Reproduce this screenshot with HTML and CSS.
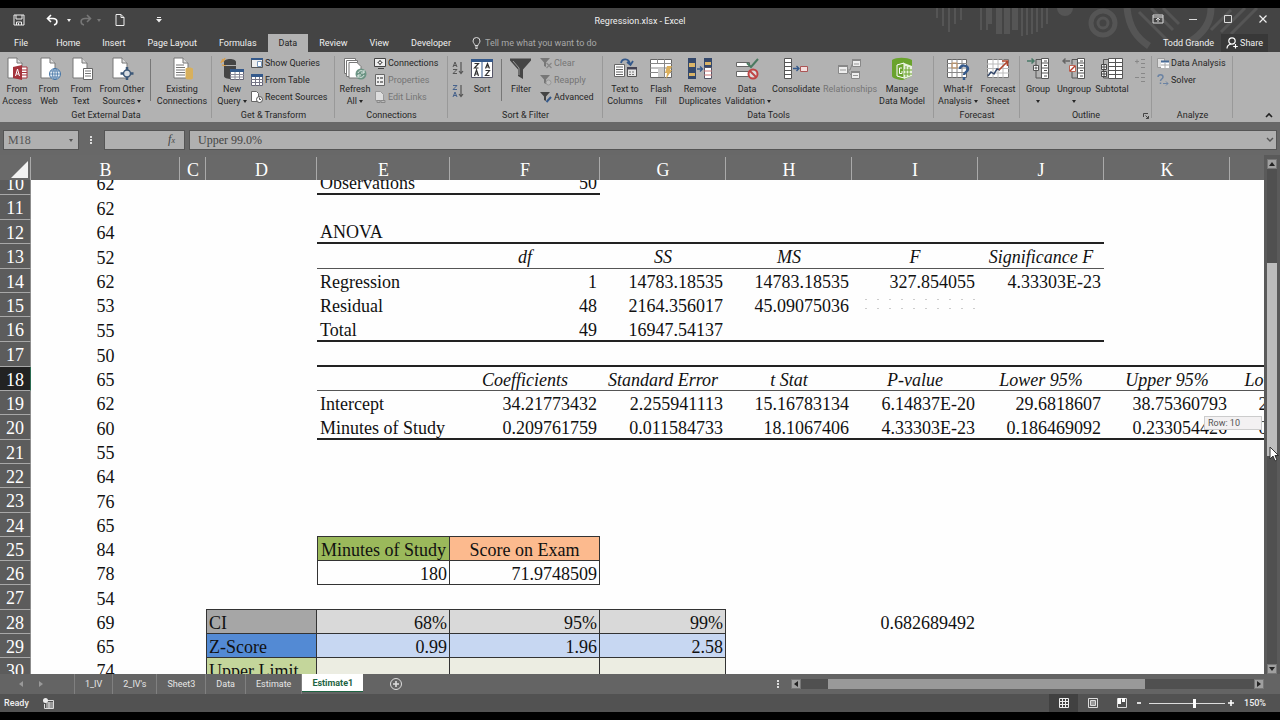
FILE: index.html
```html
<!DOCTYPE html>
<html lang="en">

<head>
    <meta charset="utf-8">
    <meta name="viewport" content="width=device-width, initial-scale=1">
    <title>Regression.xlsx - Excel</title>
    <link rel="stylesheet" href="styles.css">
</head>

<body>
    <div class="app">
        <header class="top">
            <!-- circuit pattern behind the title bar -->
            <svg class="deco" width="345" height="44" viewBox="0 0 345 44" fill="none" stroke="#555">
                <path d="M2 0v10M8 0v18M14 0v24M20 0v16M26 0v12M46 0v22M52 0v22" stroke-width="2" />
                <path d="M54 0v16M64 0v26M72 0v26M80 0v22" stroke-width="6" />
                <path d="M87 0v28M92 0v27M97 0v26M102 0v24M107 0v20M112 0v16" stroke-width="2" />
                <circle cx="130" cy="0" r="8" fill="#555" stroke="none" />
                <circle cx="168" cy="15" r="12" stroke-width="5" />
                <circle cx="168" cy="15" r="5" stroke-width="3" />
                <path d="M192 0c2 20 10 30 22 38M276 0c0 14-8 26-22 34" stroke-width="7" />
                <path d="M204 4l30 30M216 0l22 22M228 0l16 16M286 24l24-24M296 26l26-26M276 22l20-20" stroke-width="3" />
            </svg>
            <div class="titlebar">
                <div class="qat">
                    <button aria-label="Save"><svg width="12" height="12" viewBox="0 0 12 12" fill="none" stroke="#eee"><path d="M1 1h10v10H1zM3 1v4h6V1M3.500 11V8h5v3M5.500 9v2" /></svg></button>
                    <button class="undo" aria-label="Undo"><svg width="12" height="12" viewBox="0 0 12 12" fill="none" stroke="#fff" stroke-width="1.600"><path d="M5 1L1.500 4.500L5 8M1.500 4.500H7c5 0 5 5.500 1 6.500" /></svg></button>
                    <button class="drop" aria-label="Undo list"><i class="caret"></i></button>
                    <button class="dim" aria-label="Redo"><svg width="12" height="12" viewBox="0 0 12 12" fill="none" stroke="#777" stroke-width="1.600"><path d="M7 1l3.500 3.500L7 8M10.500 4.500H5c-5 0-5 5.500-1 6.500" /></svg></button>
                    <button class="drop dim" aria-label="Redo list"><i class="caret"></i></button>
                    <button class="newdoc" aria-label="New"><svg width="10" height="12" viewBox="0 0 10 12" fill="none" stroke="#eee"><path d="M1 .500h5l3 3v8H1zM6 .500v3h3" /></svg></button>
                    <button class="more" aria-label="Customize"><svg width="6" height="6" viewBox="0 0 6 6" fill="#eee"><path d="M1 0h4v1H1zM0 2h6L3 5.500z" /></svg></button>
                </div>
                <h1>Regression.xlsx - Excel</h1>
                <div class="winbtns">
                    <button aria-label="Ribbon options"><svg width="12" height="10" viewBox="0 0 12 10" fill="none" stroke="#ddd"><path d="M1 1h10v8H1zM1 3h10M6 8V4.500M4 6l2-2l2 2" /></svg></button>
                    <button aria-label="Minimize"><svg width="10" height="10" viewBox="0 0 10 10" stroke="#ddd"><path d="M1 5.500h8" /></svg></button>
                    <button aria-label="Maximize"><svg width="10" height="10" viewBox="0 0 10 10" fill="none" stroke="#ddd"><path d="M1.500 1.500h7v7h-7z" /></svg></button>
                    <button aria-label="Close"><svg width="10" height="10" viewBox="0 0 10 10" stroke="#eee" stroke-width="1.200"><path d="M1.500 1.500l7 7M8.500 1.500l-7 7" /></svg></button>
                </div>
            </div>
            <nav class="tabs">
                <button class="file">File</button>
                <button>Home</button>
                <button>Insert</button>
                <button>Page Layout</button>
                <button>Formulas</button>
                <button class="on">Data</button>
                <button>Review</button>
                <button>View</button>
                <button>Developer</button>
                <label class="tell">
                    <svg width="9" height="12" viewBox="0 0 9 12" fill="none" stroke="#ddd"><path d="M3 8.500C3 7 1 6 1 4a3.500 3.500 0 0 1 7 0c0 2-2 3-2 4.500zM3 10h3M3.500 11.500h2" /></svg>
                    <input type="text" placeholder="Tell me what you want to do">
                </label>
                <button class="user">Todd Grande</button>
                <button class="share">
                    <svg width="12" height="12" viewBox="0 0 12 12" fill="none" stroke="#fff" stroke-width="1.200"><circle cx="6" cy="4" r="3.200" /><path d="M1 11.500c0-3 2-4 4-4.500M9.500 7v4.500M7.200 9.500h4.600" /></svg>
                    Share
                </button>
            </nav>
        </header>

        <div class="ribbon">
            <section class="group g-ext">
                <div class="items">
                    <button class="big w32"><svg viewBox="0 0 24 24"><path d="M3 1h9l5 5v15H3z" fill="#fff" stroke="#777" /><path d="M12 1v5h5" fill="#ddd" stroke="#777" /><path d="M15 10h7v11h-7z" fill="#fff" stroke="#a5333c" /><path d="M17 13h5M17 15.500h5M17 18h5" stroke="#a5333c" /><path d="M8 10l9-2v15l-9-2z" fill="#a5333c" /><path d="M10.500 19l2-7l2 7M11.200 17h2.700" stroke="#fff" fill="none" /></svg>From<br>Access</button>
                    <button class="big w32"><svg viewBox="0 0 24 24"><path d="M4 1h9l5 5v15H4z" fill="#fff" stroke="#777" /><path d="M13 1v5h5" fill="#ddd" stroke="#777" /><circle cx="18" cy="17" r="5.500" fill="#e4edf5" stroke="#4474a5" /><path d="M12.500 17h11M13.500 14h9M13.500 20h9M18 11.500v11" stroke="#4474a5" stroke-width=".8" /><ellipse cx="18" cy="17" rx="2.500" ry="5.500" fill="none" stroke="#4474a5" stroke-width=".8" /></svg>From<br>Web</button>
                    <button class="big w32"><svg viewBox="0 0 24 24"><path d="M4 1h9l5 5v15H4z" fill="#fff" stroke="#777" /><path d="M13 1v5h5" fill="#ddd" stroke="#777" /><path d="M14.500 11.500h9v11h-9z" fill="#fff" stroke="#666" /><path d="M16 14h6M16 16.500h6M16 19h6" stroke="#777" /></svg>From<br>Text</button>
                    <button class="big w50"><svg viewBox="0 0 24 24"><path d="M3 1h9l5 5v15H3z" fill="#fff" stroke="#777" /><path d="M12 1v5h5" fill="#ddd" stroke="#777" /><circle cx="17" cy="16.500" r="3.500" fill="#d8dde2" stroke="#3d5878" stroke-width="1.500" /><path d="M17 10v3M17 20v3M10.500 16.500h3M20.500 16.500h3" stroke="#3d5878" stroke-width="2.500" /></svg>From Other<br>Sources <i class="caret"></i></button>
                    <span class="sep"></span>
                    <button class="big w58"><svg viewBox="0 0 24 24"><path d="M4 1h9l5 5v15H4z" fill="#fff" stroke="#777" /><path d="M13 1v5h5" fill="#ddd" stroke="#777" /><path d="M6 8h8M6 10.500h9M6 13h9M6 15.500h9M6 18h9" stroke="#777" /><path d="M15.500 12v9c0 2 7.500 2 7.500 0v-9c0-2-7.500-2-7.500 0z" fill="#d8b05c" /></svg>Existing<br>Connections</button>
                </div>
                <h2>Get External Data</h2>
            </section>

            <section class="group g-get">
                <div class="items pad">
                    <button class="big w36"><svg viewBox="0 0 24 24"><path d="M1 6l2-4M2 8l4 1M5 1L3 5" stroke="#d8a050" stroke-width="1.500" /><path d="M4 5c0-4 12-4 12 0v3H4zM4 9h12v3l-4 1v9c-5 0-8-1-8-3z" fill="#454545" /><path d="M10.500 12.500h13v10h-13z" fill="#fff" stroke="#667" /><path d="M10 12h14v3H10z" fill="#34598b" /><path d="M10 17.500h14M10 20h14M15 15v8M19.500 15v8" stroke="#889" /></svg>New<br>Query <i class="caret"></i></button>
                    <div class="col">
                        <button><svg viewBox="0 0 12 12"><path d="M.500 1.500h11v9H.500z" fill="#eee" stroke="#555" /><path d="M0 1h12v2H0z" fill="#34598b" /><path d="M6.500 4.500h4v5h-4z" fill="#fff" stroke="#7a98bb" /></svg>Show Queries</button>
                        <button><svg viewBox="0 0 12 12"><path d="M.500 .500h11v11H.500z" fill="#fff" stroke="#667" /><path d="M0 0h12v3H0z" fill="#34598b" /><path d="M0 5.500h12M0 8.500h12M4.500 3v9M8.500 3v9" stroke="#778" /></svg>From Table</button>
                        <button><svg viewBox="0 0 12 12"><path d="M.500 .500h5l2 2v8h-7z" fill="#fff" stroke="#666" /><circle cx="8.500" cy="8.500" r="3" fill="#fff" stroke="#555" /><path d="M8.500 6.500v2h1.500" stroke="#555" fill="none" /></svg>Recent Sources</button>
                    </div>
                </div>
                <h2>Get &amp; Transform</h2>
            </section>

            <section class="group g-con">
                <div class="items pad">
                    <button class="big w36"><svg viewBox="0 0 24 24"><path d="M1.500 1.500h11v15h-11z" fill="#fff" stroke="#777" /><path d="M3.500 3.500h11v16h-11z" fill="#fff" stroke="#777" /><path d="M6 5.500h8l4 4V21H6z" fill="#fff" stroke="#777" /><circle cx="18" cy="17" r="5.500" fill="#6c9484" /><path d="M15 16c1-3 5-3 6-.500M21 13v3h-3M21 18c-1 3-5 3-6 .500M15 21v-3h3" stroke="#dfe9e4" fill="none" /></svg>Refresh<br>All <i class="caret"></i></button>
                    <div class="col">
                        <button><svg viewBox="0 0 12 12"><path d="M.500 1.500h11v8H.500z" fill="#eee" stroke="#444" /><path d="M6 3v5M3.500 5.500h5M4 11.500h6" stroke="#444" /><circle cx="6" cy="5.500" r="1.500" fill="#fff" stroke="#444" /></svg>Connections</button>
                        <button disabled><svg viewBox="0 0 12 12"><path d="M1.500 .500h9v11h-9z" fill="#eee" stroke="#666" /><path d="M3 4h2M6 4h3M3 8h2M6 8h3" stroke="#666" stroke-width="1.500" /></svg>Properties</button>
                        <button disabled><svg viewBox="0 0 12 12"><path d="M1.500 .500h5l3 3v6h-8z" fill="#ddd" stroke="#999" /><path d="M3 9.500h3v2H3zM7 9.500h4v2H7z" fill="#bbb" stroke="#888" /></svg>Edit Links</button>
                    </div>
                </div>
                <h2>Connections</h2>
            </section>

            <section class="group g-sort">
                <div class="items">
                    <div class="az">
                        <button aria-label="Sort A to Z"><svg viewBox="0 0 12 14" fill="none" stroke="#555"><path d="M1 6l2-5l2 5M1.700 4.500h2.600M1 8.500h4l-4 4h4" /><path d="M9 1v11M7 10l2 2.500l2-2.500" stroke-width="1.200" /></svg></button>
                        <button aria-label="Sort Z to A"><svg viewBox="0 0 12 14" fill="none" stroke="#555"><path d="M1 1.500h4l-4 4h4" stroke="#46628c" /><path d="M1 13l2-5l2 5M1.700 11.500h2.600" stroke="#46628c" /><path d="M9 1v11M7 10l2 2.500l2-2.500" stroke-width="1.200" /></svg></button>
                    </div>
                    <button class="big w36"><svg viewBox="0 0 24 24"><path d="M1.500 2.500h21v18h-21z" fill="#fff" stroke="#556" /><path d="M1 2h22v3H1zM11.500 5h1v16h-1z" fill="#34598b" /><path d="M4.500 6.500h4L4.500 11h4M4.500 19l2-6l2 6M5.200 17h2.600M15.500 11.500l2-5l2 5M16.200 10h2.600M15.500 13.500h4l-4 5h4" fill="none" stroke="#333" stroke-width="1.200" /></svg>Sort</button>
                    <span class="sep s1"></span>
                    <button class="big w36"><svg viewBox="0 0 24 24"><path d="M1 1.500h21v2l-8 9V22l-5-3v-6.500l-8-9z" fill="#454545" /><path d="M4 4l6 7v7" stroke="#999" fill="none" /></svg>Filter</button>
                    <div class="col">
                        <button disabled><svg viewBox="0 0 12 12"><path d="M0 1h10L6 5.500V10L4 9V5.500z" fill="#777" /><path d="M6.500 6l5 5M11.500 6l-5 5" stroke="#888" stroke-width="1.300" /></svg>Clear</button>
                        <button disabled><svg viewBox="0 0 12 12"><path d="M0 1h10L6 5.500V10L4 9V5.500z" fill="#777" /><circle cx="8.500" cy="8.500" r="2.500" fill="#bbb" stroke="#999" /></svg>Reapply</button>
                        <button><svg viewBox="0 0 12 12"><path d="M0 1h10L6 5.500V10L4 9V5.500z" fill="#444" /><path d="M6.500 11l4.500-5" stroke="#34598b" stroke-width="2" /></svg>Advanced</button>
                    </div>
                </div>
                <h2>Sort &amp; Filter</h2>
            </section>

            <section class="group g-tools">
                <div class="items">
                    <button class="big w44"><svg viewBox="0 0 24 24"><path d="M1.500 7.500h10v12h-10z" fill="#fff" stroke="#666" /><path d="M3 10h7M3 12.500h7M3 15h7M3 17.500h7" stroke="#666" /><path d="M14.500 10.500h9v9h-9z" fill="#e8e8e8" stroke="#555" /><path d="M14 10h10v2.500H14z" fill="#445" /><path d="M16 15h6M16 17.500h6" stroke="#777" stroke-dasharray="2 1" /><path d="M8 6c1-5 8-5 9 1M14 5l3.500 3L20 4" stroke="#34598b" stroke-width="1.800" fill="none" /></svg>Text to<br>Columns</button>
                    <button class="big w28"><svg viewBox="0 0 24 24"><path d="M1.500 2.500h21v18h-21z" fill="#fff" stroke="#666" /><path d="M1 6.500h22M1 11h22M1 15.500h22M8.500 2v5M15.500 2v19" stroke="#888" /><path d="M9 11.500h6v8.500H9z" fill="#ccc" /><path d="M18 9h5l-2 4h2l-6 9l1-6h-2z" fill="#dcb05c" /></svg>Flash<br>Fill</button>
                    <button class="big w50"><svg viewBox="0 0 24 24"><path d="M0 1h8v21H0zM16 1h8v10h-8z" fill="#34486b" /><path d="M1 6h6v4H1zM1 16h6v3H1zM17 5h6v3h-6z" fill="#d9b468" /><path d="M16.500 10.500h7v11h-7z" fill="#fff" stroke="#556" /><path d="M16 14h8M16 18h8" stroke="#c77" /><path d="M9 12h5M12 9.500l2.500 2.500L12 14.500" stroke="#34598b" stroke-width="1.300" fill="none" /></svg>Remove<br>Duplicates</button>
                    <button class="big w44"><svg viewBox="0 0 24 24"><path d="M1.500 5.500h13v4h-13zM1.500 14.500h12v5h-12z" fill="#fff" stroke="#666" /><path d="M12 6l4 4l7-8" stroke="#4a7a60" stroke-width="2" fill="none" /><circle cx="18" cy="17" r="4.500" fill="#ddd" stroke="#bf4444" stroke-width="2" /><path d="M15 14l6 6" stroke="#bf4444" stroke-width="2" /></svg>Data<br>Validation <i class="caret"></i></button>
                    <button class="big w54"><svg viewBox="0 0 24 24"><path d="M.500 1.500h7v20h-7z" fill="#fff" stroke="#555" /><path d="M0 5.500h8M0 9.500h8M0 13.500h8M0 17.500h8" stroke="#555" /><path d="M9 11.500h6M12.500 9l2.500 2.500l-2.500 2.500" stroke="#34598b" stroke-width="1.300" fill="none" /><path d="M16.500 9.500h7v5h-7z" fill="#f3dede" stroke="#a55" /></svg>Consolidate</button>
                    <button class="big w54" disabled><svg viewBox="0 0 24 24"><path d="M9 13h3l3-8M9 13l4 5h3" stroke="#888" fill="none" /><path d="M.500 8.500h9v8h-9zM14.500 2.500h8v7h-8zM13.500 14.500h8v7h-8z" fill="#eee" stroke="#888" /><path d="M0 8h10v2H0zM14 2h9v2h-9zM13 14h9v2h-9z" fill="#888" /><path d="M2 13h6M16 7h5M15 18.500h5" stroke="#999" /></svg>Relationships</button>
                    <button class="big w50"><svg viewBox="0 0 24 24"><path d="M2 3c4-3 15-3 20 0v16l-9 4c-5 0-11-2-11-4z" fill="#6aa32c" /><path d="M7 8l7-2v15l-7-2z" fill="#6aa32c" stroke="#fff" /><path d="M12 11H9.500v5.500H12V14" stroke="#fff" fill="none" /><path d="M14 6l8 3v10l-8 3z" fill="#e8f2dc" /><path d="M16 9v11M19 10v9M14 13h8M14 17h8" stroke="#6aa32c" /></svg>Manage<br>Data Model</button>
                </div>
                <h2>Data Tools</h2>
            </section>

            <section class="group g-fore">
                <div class="items pad">
                    <button class="big w44"><svg viewBox="0 0 24 24"><path d="M1.500 2.500h19v18h-19z" fill="#fff" stroke="#666" /><path d="M1 6.500h20M1 11h20M1 15.500h20M6 2v19M11 2v19M16 2v19" stroke="#888" /><path d="M6 6h5v5H6z" fill="none" stroke="#c96" /><path d="M14 12c0-5 8-4 8 0c0 3-4 3-4 6M18 20v3" stroke="#34598b" stroke-width="2.500" fill="none" /></svg>What-If<br>Analysis <i class="caret"></i></button>
                    <button class="big w36"><svg viewBox="0 0 24 24"><path d="M1.500 2.500h21v18h-21z" fill="#fff" stroke="#777" /><path d="M1 7h22M1 11.500h22M1 16h22M7 2v19M12 2v19M17 2v19" stroke="#bbb" /><path d="M2 19l3-4l3 2l3-5l3 1" stroke="#34486b" stroke-width="1.500" fill="none" /><path d="M13 13l8-8M16 4h5.500v5" stroke="#b0452c" stroke-width="1.600" fill="none" /></svg>Forecast<br>Sheet</button>
                </div>
                <h2>Forecast</h2>
            </section>

            <section class="group g-out">
                <div class="items">
                    <button class="big w36"><svg viewBox="0 0 24 24"><path d="M1 4h7M5.500 1.500L8 4L5.500 6.500" stroke="#4a7a68" stroke-width="1.500" fill="none" /><path d="M15 2.500h-5v5M10 14v7h5M10 7v3" stroke="#555" fill="none" /><path d="M7.500 8.500h5v5h-5z" fill="#fff" stroke="#555" /><path d="M8.500 11h3M10 9.500v3" stroke="#555" /><path d="M15.500 1.500h7v20h-7z" fill="#fff" stroke="#555" /><path d="M15 6h8M15 11h8M15 16h8M18 4h3M18 8.500h3M18 13.500h3M18 19h3" stroke="#555" /></svg>Group<br><i class="caret"></i></button>
                    <button class="big w36"><svg viewBox="0 0 24 24"><path d="M1 4h7M3.500 1.500L1 4l2.500 2.500" stroke="#666" stroke-width="1.500" fill="none" /><path d="M15 2.500h-5v5M10 14v7h5" stroke="#555" fill="none" /><path d="M7.500 8.500h6v6h-6z" fill="#fff" stroke="#b65" /><path d="M8 14l5-5" stroke="#b43c2c" stroke-width="1.500" /><path d="M15.500 1.500h7v20h-7z" fill="#fff" stroke="#555" /><path d="M15 6h8M15 11h8M15 16h8M18 4h3M18 8.500h3M18 13.500h3M18 19h3" stroke="#555" /></svg>Ungroup<br><i class="caret"></i></button>
                    <button class="big w40"><svg viewBox="0 0 24 24"><path d="M8 2.500H3.500V21H8" stroke="#555" fill="none" /><path d="M1.500 7.500h5v5h-5zM1.500 14.500h5v5h-5z" fill="#fff" stroke="#444" /><path d="M2 10h4M4 8v4M2 17h4M4 15v4" stroke="#444" /><path d="M8.500 1.500h14v20h-14z" fill="#fff" stroke="#555" /><path d="M8 5.500h15M8 9.500h15M8 13.500h15M8 17.500h15M15.500 1v21" stroke="#555" /></svg>Subtotal</button>
                    <div class="az up">
                        <button disabled aria-label="Show detail"><svg viewBox="0 0 12 14" stroke="#888"><path d="M7 3.500h4M7 7.500h4M7 11.500h4M1 5.500h4M3 3.500v4" /></svg></button>
                        <button disabled aria-label="Hide detail"><svg viewBox="0 0 12 14" stroke="#888"><path d="M7 1.500h4M7 5.500h4M7 9.500h4M1 5.500h4" /></svg></button>
                    </div>
                </div>
                <h2>Outline</h2>
                <button class="launch" aria-label="Outline settings"><svg width="6" height="6" viewBox="0 0 6 6" fill="none" stroke="#444"><path d="M.500 4V.500H5M2.500 2.500l3 3M5.500 3v2.500H3" /></svg></button>
            </section>

            <section class="group g-ana">
                <div class="items pad4">
                    <div class="col">
                        <button><svg viewBox="0 0 12 12"><path d="M.500 1.500h7v9h-7z" fill="#ddd" stroke="#999" /><path d="M4 4h8v7H4z" fill="#fff" /><path d="M4 3.500h8v2H4z" fill="#4a6c96" /><path d="M4 8h8M8 6v5" stroke="#aaa" /></svg>Data Analysis</button>
                        <button><svg viewBox="0 0 12 12"><path d="M1 3c0-3 5-3 5 0c0 2-2.500 2-2.500 4M3.500 8.500v1.500" stroke="#6b83a3" stroke-width="1.500" fill="none" /><path d="M6 9.500h5M9 7.500l2 2l-2 2" stroke="#6b83a3" fill="none" /></svg>Solver</button>
                    </div>
                </div>
                <h2>Analyze</h2>
            </section>
            <button class="fold" aria-label="Collapse the ribbon"><svg width="8" height="6" viewBox="0 0 8 6" fill="none" stroke="#222" stroke-width="1.600"><path d="M1 5l3-3l3 3" /></svg></button>
        </div>

        <div class="fbar">
            <div class="namebox">
                <input type="text" aria-label="Name box" value="M18">
                <i class="caret"></i>
            </div>
            <span class="dots"></span>
            <div class="fx"><button>f<sub>x</sub></button></div>
            <div class="formula">
                <input type="text" aria-label="Formula bar" value="Upper 99.0%">
                <svg width="8" height="6" viewBox="0 0 8 6" fill="none" stroke="#555" stroke-width="1.400"><path d="M1 1l3 3l3-3" /></svg>
            </div>
        </div>

        <main class="sheet">
            <div class="cells">
                <table class="heads">
                    <colgroup><col class="c-n"><col class="c-b"><col class="c-c"><col class="c-d"><col class="c-e"><col class="c-f"><col class="c-g"><col class="c-g"><col class="c-g"><col class="c-g"><col class="c-g"><col class="c-g"></colgroup>
                    <tr>
                        <th class="corner"><svg width="17" height="17" viewBox="0 0 17 17"><path d="M17 0v17H0z" fill="#f2f2f2" /></svg></th>
                        <th>B</th><th>C</th><th>D</th><th>E</th><th>F</th><th>G</th><th>H</th><th>I</th><th>J</th><th>K</th><th></th>
                    </tr>
                </table>
                <div class="view">
                    <table class="grid">
                        <colgroup><col class="c-n"><col class="c-b"><col class="c-c"><col class="c-d"><col class="c-e"><col class="c-f"><col class="c-g"><col class="c-g"><col class="c-g"><col class="c-g"><col class="c-g"><col class="c-g"></colgroup>
                        <tr><th>10</th><td class="m">62</td><td></td><td></td><td class="l thick">Observations</td><td class="thick">50</td><td colspan="6"></td></tr>
                        <tr class="t"><th>11</th><td class="m">62</td><td></td><td></td><td colspan="8"></td></tr>
                        <tr><th>12</th><td class="m">64</td><td></td><td></td><td class="l thick">ANOVA</td><td class="thick" colspan="5"></td><td colspan="2"></td></tr>
                        <tr class="t h"><th>13</th><td class="m">52</td><td></td><td></td><td class="thin"></td><td class="thin">df</td><td class="thin">SS</td><td class="thin">MS</td><td class="thin">F</td><td class="thin">Significance F</td><td></td><td></td></tr>
                        <tr><th>14</th><td class="m">62</td><td></td><td></td><td class="l">Regression</td><td>1</td><td>14783.18535</td><td>14783.18535</td><td>327.854055</td><td>4.33303E-23</td><td></td><td></td></tr>
                        <tr><th>15</th><td class="m">53</td><td></td><td></td><td class="l">Residual</td><td>48</td><td>2164.356017</td><td>45.09075036</td><td class="specks"></td><td></td><td></td><td></td></tr>
                        <tr class="t"><th>16</th><td class="m">55</td><td></td><td></td><td class="l thick">Total</td><td class="thick">49</td><td class="thick">16947.54137</td><td class="thick" colspan="3"></td><td></td><td></td></tr>
                        <tr class="t"><th>17</th><td class="m">50</td><td></td><td></td><td class="thick" colspan="8"></td></tr>
                        <tr class="h sel"><th>18</th><td class="m">65</td><td></td><td></td><td class="thin"></td><td class="thin">Coefficients</td><td class="thin">Standard Error</td><td class="thin">t Stat</td><td class="thin">P-value</td><td class="thin">Lower 95%</td><td class="thin">Upper 95%</td><td class="thin">Lower 99.0%</td></tr>
                        <tr><th>19</th><td class="m">62</td><td></td><td></td><td class="l">Intercept</td><td>34.21773432</td><td>2.255941113</td><td>15.16783134</td><td>6.14837E-20</td><td>29.6818607</td><td>38.75360793</td><td>28.16684105</td></tr>
                        <tr class="t"><th>20</th><td class="m">60</td><td></td><td></td><td class="l thick">Minutes of Study</td><td class="thick">0.209761759</td><td class="thick">0.011584733</td><td class="thick">18.1067406</td><td class="thick">4.33303E-23</td><td class="thick">0.186469092</td><td class="thick">0.233054426</td><td class="thick">0.178689544</td></tr>
                        <tr><th>21</th><td class="m">55</td><td></td><td></td><td colspan="8"></td></tr>
                        <tr><th>22</th><td class="m">64</td><td></td><td></td><td colspan="8"></td></tr>
                        <tr class="t"><th>23</th><td class="m">76</td><td></td><td></td><td colspan="8"></td></tr>
                        <tr><th>24</th><td class="m">65</td><td></td><td></td><td class="box"></td><td class="box"></td><td colspan="6"></td></tr>
                        <tr><th>25</th><td class="m">84</td><td></td><td></td><td class="m first cell green">Minutes of Study</td><td class="m cell orange">Score on Exam</td><td colspan="6"></td></tr>
                        <tr><th>26</th><td class="m">78</td><td></td><td></td><td class="first cell">180</td><td class="cell">71.9748509</td><td colspan="6"></td></tr>
                        <tr class="t"><th>27</th><td class="m">54</td><td></td><td class="box"></td><td class="box"></td><td class="box"></td><td class="box"></td><td colspan="5"></td></tr>
                        <tr><th>28</th><td class="m">69</td><td></td><td class="l first cell gray">CI</td><td class="cell gray2">68%</td><td class="cell gray2">95%</td><td class="cell gray2">99%</td><td></td><td>0.682689492</td><td></td><td></td><td></td></tr>
                        <tr><th>29</th><td class="m">65</td><td></td><td class="l first cell blue">Z-Score</td><td class="cell blue2">0.99</td><td class="cell blue2">1.96</td><td class="cell blue2">2.58</td><td colspan="5"></td></tr>
                        <tr><th>30</th><td class="m">74</td><td></td><td class="l first cell lime">Upper Limit</td><td class="cell lime2"></td><td class="cell lime2"></td><td class="cell lime2"></td><td colspan="5"></td></tr>
                    </table>
                </div>
                <div class="tip">Row: 10</div>
            </div>
            <div class="vbar">
                <button aria-label="Scroll up"><svg width="6" height="4" viewBox="0 0 6 4"><path d="M0 4l3-4l3 4z" fill="#222" /></svg></button>
                <div class="track"><div class="thumb"></div></div>
                <button aria-label="Scroll down"><svg width="6" height="4" viewBox="0 0 6 4"><path d="M0 0l3 4l3-4z" fill="#222" /></svg></button>
                <svg class="mouse" width="10" height="16" viewBox="0 0 10 16"><path d="M1 1v12l3-3l2 5l2-1l-2-4.500h3.500z" fill="#fff" stroke="#333" /></svg>
            </div>
        </main>

        <div class="sheets">
            <button class="nav" aria-label="Previous sheets"><svg width="4" height="6" viewBox="0 0 4 6"><path d="M4 0v6L0 3z" fill="#999" /></svg></button>
            <button class="nav" aria-label="Next sheets"><svg width="4" height="6" viewBox="0 0 4 6"><path d="M0 0v6l4-3z" fill="#999" /></svg></button>
            <div class="names">
                <button>1_IV</button>
                <button>2_IV's</button>
                <button>Sheet3</button>
                <button>Data</button>
                <button>Estimate</button>
                <button class="on">Estimate1</button>
            </div>
            <button class="add" aria-label="New sheet"><svg width="14" height="14" viewBox="0 0 14 14" fill="none" stroke="#ddd"><circle cx="7" cy="7" r="5.500" /><path d="M7 4v6M4 7h6" stroke-width="1.600" /></svg></button>
            <span class="dots"></span>
            <div class="hbar">
                <button aria-label="Scroll left"><svg width="4" height="6" viewBox="0 0 4 6"><path d="M4 0v6L0 3z" fill="#222" /></svg></button>
                <div class="track"><div class="thumb"></div></div>
                <button aria-label="Scroll right"><svg width="4" height="6" viewBox="0 0 4 6"><path d="M0 0v6l4-3z" fill="#222" /></svg></button>
            </div>
        </div>

        <footer class="status">
            <span class="ready">Ready</span>
            <button class="macro" aria-label="Record macro"><svg width="11" height="11" viewBox="0 0 11 11"><path d="M2.500 2.500h8v8H1.500V6" fill="none" stroke="#ddd" /><path d="M3 5h7M3 7h7M3 9h7M6 4v6" stroke="#ddd" /><circle cx="2.500" cy="2.500" r="2.500" fill="#eee" /></svg></button>
            <button class="mode on" aria-label="Normal"><svg width="12" height="12" viewBox="0 0 12 12" fill="none" stroke="#eee"><path d="M1.500 1.500h9v9h-9zM4.500 1v10M7.500 1v10M1 4.500h10M1 7.500h10" /></svg></button>
            <button class="mode" aria-label="Page layout"><svg width="12" height="12" viewBox="0 0 12 12" fill="none" stroke="#ddd"><path d="M1.500 1.500h9v9h-9zM3.500 3.500h5v5h-5zM4 5h4M4 7h4" /></svg></button>
            <button class="mode" aria-label="Page break preview"><svg width="12" height="12" viewBox="0 0 12 12"><path d="M1.500 1.500h9v9h-9z" fill="none" stroke="#ddd" /><path d="M2 1h3v6H2zM6 1h3v4H6z" fill="#fff" /></svg></button>
            <button class="zoom" aria-label="Zoom out"><svg width="6" height="6" viewBox="0 0 6 6"><path d="M1 3h4" stroke="#fff" stroke-width="1.600" /></svg></button>
            <input type="range" aria-label="Zoom" min="0" max="100" value="60">
            <button class="zoom" aria-label="Zoom in"><svg width="6" height="6" viewBox="0 0 6 6"><path d="M0 3h6M3 0v6" stroke="#fff" stroke-width="1.600" /></svg></button>
            <span class="pct">150%</span>
        </footer>
    </div>
</body>

</html>
```

FILE: styles.css
```css
* {
    box-sizing: border-box;
    margin: 0;
    padding: 0;
}

html,
body {
    height: 100%;
    background: #000;
}

body,
button,
input {
    font-family: Roboto, "Open Sans", sans-serif;
    font-size: 9px;
    line-height: 12px;
}

button {
    background: none;
    border: 0;
    color: inherit;
    cursor: pointer;
    white-space: nowrap;
}

input {
    background: none;
    border: 0;
    outline: none;
    color: inherit;
    min-width: 0;
}

svg {
    display: block;
    flex: none;
}

.app {
    height: 100vh;
    padding: 8px 0;
    display: flex;
    flex-direction: column;
}

.caret {
    display: inline-block;
    border: 2px solid transparent;
    border-top: 3px solid currentColor;
    border-bottom: 0;
    vertical-align: middle;
}

.dots {
    width: 2px;
    height: 9px;
    background: repeating-linear-gradient(#ddd 0 2px, transparent 2px 3px);
}

/* title bar and tabs */
.top {
    position: relative;
    background: #444;
    color: #f0f0f0;
}

.deco {
    position: absolute;
    right: 0;
    top: 0;
}

.titlebar {
    position: relative;
    height: 26px;
    display: grid;
    grid-template-columns: 1fr auto 1fr;
    align-items: center;
}

.titlebar h1 {
    font-size: 9px;
    font-weight: 400;
}

.qat {
    display: flex;
    align-items: center;
    padding: 0 0 2px 13px;
}

.qat .undo {
    margin-left: 21px;
}

.qat .drop {
    width: 22px;
    text-align: center;
}

.qat .drop.dim {
    width: 14px;
}

.qat .dim {
    color: #777;
}

.qat .newdoc {
    margin-left: 9px;
}

.qat .more {
    margin-left: 31px;
}

.winbtns {
    display: flex;
    justify-content: flex-end;
    padding-bottom: 4px;
}

.winbtns button {
    width: 35px;
    display: flex;
    justify-content: center;
}

.tabs {
    position: relative;
    display: flex;
    height: 18px;
    padding: 0 12px 0 3px;
}

.tabs button {
    padding: 0 11px;
}

.tabs .file {
    margin-right: 6px;
}

.tabs .on {
    background: #b2b2b2;
    color: #222;
}

.tell {
    display: flex;
    flex: 1;
    align-items: center;
    gap: 4px;
    padding-left: 10px;
}

.tell input {
    width: 160px;
}

.tell input::placeholder {
    color: #a8a8a8;
    opacity: 1;
}

.tabs .user {
    padding: 0 7px;
}

.tabs .share {
    display: flex;
    align-items: center;
    gap: 2px;
    padding: 0 5px;
    background: #383838;
}

/* ribbon */
.ribbon {
    display: flex;
    height: 70px;
    flex: none;
    background: #b2b2b2;
    color: #262626;
}

.group {
    position: relative;
    display: flex;
    flex-direction: column;
    justify-content: space-between;
    flex: none;
    background: linear-gradient(#999, #999) right center / 1px 62px no-repeat;
}

.group h2 {
    font-size: 9px;
    font-weight: 400;
    text-align: center;
    padding-bottom: 1px;
}

.g-ext { width: 212px; }
.g-get { width: 123px; }
.g-con { width: 113px; }
.g-sort { width: 155px; }
.g-tools { width: 331px; }
.g-fore { width: 86px; }
.g-out { width: 132px; }
.g-ana { width: 81px; }

.items {
    display: flex;
}

.g-ext .items {
    padding-left: 1px;
}

.items.pad {
    padding-left: 2px;
}

.items.pad4 {
    padding-left: 4px;
}

.big {
    padding-top: 5px;
    align-self: flex-start;
    text-align: center;
}

.big svg {
    width: 24px;
    height: 24px;
    margin: 0 auto 2px;
}

.w28 { width: 28px; }
.w32 { width: 32px; }
.w36 { width: 36px; }
.w40 { width: 40px; }
.w44 { width: 44px; }
.w50 { width: 50px; }
.w54 { width: 54px; }
.w58 { width: 58px; }

.ribbon button:disabled {
    color: #757575;
}

.sep {
    width: 1px;
    height: 42px;
    margin: 7px 2px 0 3px;
    background: #777;
}

.sep.s1 {
    margin: 7px 1px 0;
}

.col {
    display: flex;
    flex-direction: column;
    padding-top: 2px;
}

.col button {
    display: flex;
    align-items: center;
    gap: 2px;
    height: 17px;
    padding-left: 1px;
}

.col svg {
    width: 12px;
    height: 12px;
}

.az {
    display: flex;
    flex-direction: column;
    gap: 9px;
    width: 16px;
    padding: 9px 0 0 4px;
}

.az.up {
    gap: 2px;
    padding: 4px 0 0 2px;
}

.az svg {
    width: 12px;
    height: 14px;
}

.launch {
    position: absolute;
    right: 3px;
    bottom: 3px;
}

.fold {
    margin-left: auto;
    align-self: flex-end;
    padding: 0 7px 4px 0;
}

/* formula bar */
.fbar {
    display: flex;
    align-items: center;
    height: 33px;
    flex: none;
    padding: 3px 3px 0;
    background: #686868;
    color: #444;
}

.fbar input,
.fx button {
    font-family: "Liberation Serif", serif;
    font-size: 12px;
}

.namebox,
.fx,
.formula {
    display: flex;
    align-items: center;
    height: 20px;
    background: #b0b0b0;
    border: 1px solid #555;
}

.namebox {
    width: 76px;
    padding: 0 5px 0 4px;
    color: #555;
}

.namebox input {
    flex: 1;
}

.fbar .dots {
    margin: 0 12px 0 11px;
}

.fx {
    width: 81px;
    justify-content: flex-end;
    padding-right: 9px;
}

.fx button {
    font-style: italic;
}

.fx sub {
    font-size: 8px;
    vertical-align: baseline;
}

.formula {
    flex: 1;
    margin-left: 4px;
    padding: 0 2px 0 8px;
}

.formula input {
    flex: 1;
}

/* worksheet */
.sheet {
    display: flex;
    flex: 1;
    min-height: 0;
    background: #696969;
}

.cells {
    position: relative;
    display: flex;
    flex-direction: column;
    flex: 1;
    min-width: 0;
    overflow: hidden;
}

.view {
    flex: 1;
    min-height: 0;
    overflow: hidden;
    background: #fefefe;
}

table {
    width: 1356px;
    table-layout: fixed;
    border-collapse: separate;
    border-spacing: 0;
    font-family: "Liberation Serif", serif;
    font-size: 18px;
    line-height: 20px;
}

.c-n { width: 31px; }
.c-b { width: 149px; }
.c-c { width: 26px; }
.c-d { width: 111px; }
.c-e { width: 133px; }
.c-f { width: 150px; }
.c-g { width: 126px; }

.heads th {
    height: 25px;
    padding-top: 4px;
    font-weight: 400;
    color: #fff;
    background: linear-gradient(#aaa, #aaa) right bottom / 1px 23px no-repeat #696969;
}

.heads .corner svg {
    margin: 0 0 0 11px;
}

/* row 10 is scrolled partly under the column letters */
.grid {
    margin-top: -9px;
}

.grid tr {
    height: 24px;
}

.grid .t {
    height: 25px;
}

.grid th {
    padding-top: 2px;
    font-weight: 400;
    color: #fff;
    background: #5c5c5c;
    border-bottom: 1px solid #a8a8a8;
    border-right: 1px solid #8c8c8c;
}

.grid .sel th {
    background: #222;
    border-right-color: #2a6a50;
}

.grid td {
    padding: 2px 3px 0;
    text-align: right;
    white-space: nowrap;
    overflow: hidden;
    color: #111;
}

.grid .m {
    text-align: center;
}

.grid .l {
    text-align: left;
}

.grid .h td {
    text-align: center;
}

.grid .h .thin {
    font-style: italic;
    border-bottom: 1px solid #555;
}

.grid .thick {
    border-bottom: 2px solid #222;
}

.grid .specks {
    background: radial-gradient(circle, #ccc 0 1px, transparent 1px) 8px 2px / 12px 9px;
    background-clip: content-box;
}

.grid .box {
    border-bottom: 1px solid #333;
}

.grid .cell {
    padding: 2px 2px 0;
    border-right: 1px solid #333;
    border-bottom: 1px solid #333;
}

.grid .first {
    border-left: 1px solid #333;
}

.green { background: #9bb95b; }
.orange { background: #fcba8e; }
.gray { background: #a6a6a6; }
.gray2 { background: #d9d9d9; }
.blue { background: #538ad4; }
.blue2 { background: #c7d7f2; }
.lime { background: #c4d69b; }
.lime2 { background: #ecede2; }

.tip {
    position: absolute;
    right: 2px;
    top: 261px;
    width: 58px;
    padding: 0 3px;
    background: #f3f1f2;
    border: 1px solid #ccc;
    color: #555;
}

.vbar {
    position: relative;
    display: flex;
    flex-direction: column;
    align-items: center;
    width: 16px;
    padding-top: 4px;
    background: #5a5a5a;
}

.vbar button,
.hbar button {
    display: flex;
    align-items: center;
    justify-content: center;
    flex: none;
    width: 10px;
    height: 10px;
    background: #a0a0a0;
    border: 1px solid #777;
}

.vbar .track {
    flex: 1;
    width: 10px;
    background: #505050;
}

.vbar .thumb {
    position: relative;
    top: 19%;
    height: 39%;
    background: #bdbdbd;
}

.mouse {
    position: absolute;
    left: 5px;
    top: 291px;
}

/* sheet tabs */
.sheets {
    display: flex;
    align-items: center;
    height: 20px;
    flex: none;
    padding: 0 16px 0 19px;
    background: #646464;
    color: #e6e6e6;
}

.sheets .nav {
    width: 20px;
}

.names {
    display: flex;
    align-self: stretch;
    margin-left: 15px;
    border-left: 1px solid #808080;
}

.names button {
    padding: 0 10px;
    border-right: 1px solid #808080;
}

.names .on {
    height: 18px;
    background: #fff;
    color: #1e6443;
    font-weight: 700;
    border-right: 0;
    border-bottom: 1px solid #1e6443;
}

.sheets .add {
    margin: 0 auto 0 26px;
}

.hbar {
    display: flex;
    width: 38%;
    margin-left: 12px;
}

.hbar .track {
    flex: 1;
    background: #505050;
}

.hbar .thumb {
    width: 70%;
    height: 10px;
    margin-left: 6%;
    background: #999;
}

/* status bar */
.status {
    display: flex;
    align-items: center;
    height: 18px;
    flex: none;
    padding: 0 14px 0 4px;
    background: #525252;
    color: #f0f0f0;
}

.ready,
.pct {
    font-weight: 500;
}

.macro {
    margin: 0 auto 0 14px;
}

.mode {
    display: flex;
    align-items: center;
    justify-content: center;
    width: 29px;
    height: 18px;
}

.mode.on {
    background: #414141;
}

.zoom {
    width: 8px;
}

.pct {
    margin-left: 8px;
}

.status input {
    appearance: none;
    width: 76px;
    height: 9px;
    margin: 0 3px 0 5px;
    background: linear-gradient(#ddd, #ddd) center / 100% 1px no-repeat;
}

.status input::-webkit-slider-thumb {
    appearance: none;
    width: 3px;
    height: 9px;
    background: #fff;
}
```
